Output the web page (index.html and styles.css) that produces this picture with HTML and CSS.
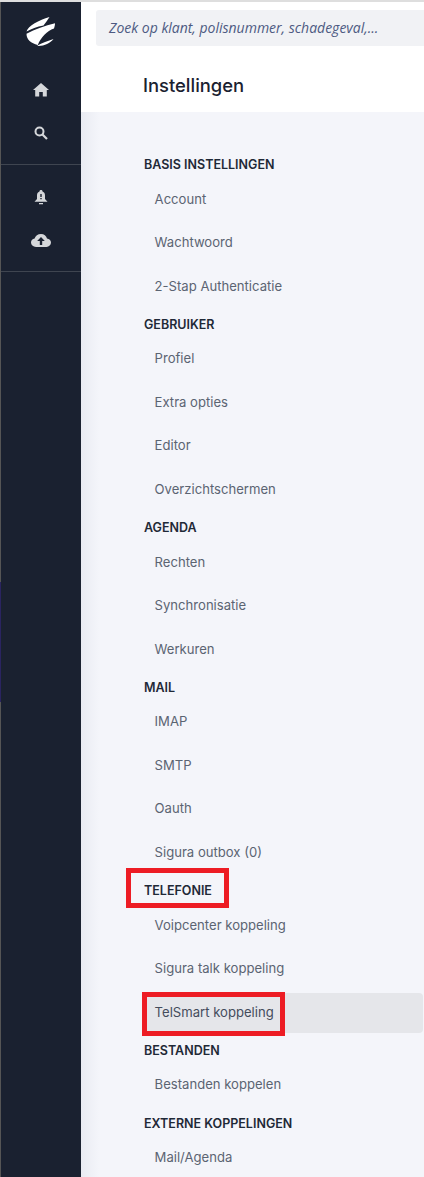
FILE: index.html
```html
<!doctype html>
<html>
<head>
    <meta charset="utf-8">
    <title>Instellingen</title>
    <link rel="stylesheet" href="styles.css">
</head>

<body>
    <div class="app">
        <div class="sidebar">
            <div class="logo">
                <svg width="30" height="30" viewBox="26 17 30 30">
                    <path d="M26.500 31.500 C28 26 39 20 49.500 17 C47.500 20 45.500 23 43.500 25.500 C37 26.500 31 29 26.500 31.500Z" fill="#fff"/>
                    <path d="M26.500 33.800 C35 29.500 45 25.500 55 23.300 C55 25.500 54.500 27 54 28.500 C47 31 41 37 37.800 45 C31 43 26.500 40 26.500 33.800Z" fill="#fff"/>
                    <path d="M37 45.800 C43 46.500 50 43.500 53.500 39 C48 41 42 43 37 45.800Z" fill="#fff"/>
                </svg>
            </div>
            <div class="side-group">
                <svg class="ico" width="16" height="14" viewBox="0 0 16 14"><path d="M8 0 L16 7 L13.800 7 L13.800 13.500 L9.800 13.500 L9.800 9 L6.200 9 L6.200 13.500 L2.200 13.500 L2.200 7 L0 7Z" fill="#d5d7da"/></svg>
                <svg class="ico" width="14" height="14" viewBox="0 0 14 14"><circle cx="5.500" cy="5.500" r="4" fill="none" stroke="#d5d7da" stroke-width="2"/><path d="M8.500 8.500 L13 13" stroke="#d5d7da" stroke-width="2.200"/></svg>
            </div>
            <div class="side-group second">
                <svg class="ico" width="14" height="15" viewBox="0 0 14 15"><path d="M7 0 C8 0 8.500 .6 8.500 1.400 C10.400 2 11 3.600 11 5.600 L11 9 L13.500 11.800 L.5 11.800 L3 9 L3 5.600 C3 3.600 3.600 2 5.500 1.400 C5.500 .6 6 0 7 0Z M6.300 4 L6.300 7 L7.700 7 L7.700 4Z M6.300 8 L6.300 9.200 L7.700 9.200 L7.700 8Z M5 13 L9 13 L9 14.200 L5 14.200Z" fill="#d5d7da" fill-rule="evenodd"/></svg>
                <svg class="ico" width="20" height="13" viewBox="0 0 20 13"><path d="M5 13 C2 13 0 11 0 8.600 C0 6.400 1.600 4.800 3.600 4.600 C4.400 2 6.800 0 10 0 C13 0 15.400 2 16 4.600 C18.200 4.800 20 6.400 20 8.600 C20 11 18 13 15.500 13Z M10 3 L6.200 7 L8.800 7 L8.800 11 L11.200 11 L11.200 7 L13.800 7Z" fill="#d5d7da" fill-rule="evenodd"/></svg>
            </div>
        </div>

        <div class="content">
            <div class="top">
                <div class="search">Zoek op klant, polisnummer, schadegeval,...</div>
                <h1 class="title">Instellingen</h1>
            </div>
            <div class="settings">
                <div class="head">BASIS INSTELLINGEN</div>
                <a class="item">Account</a>
                <a class="item">Wachtwoord</a>
                <a class="item">2-Stap Authenticatie</a>

                <div class="head">GEBRUIKER</div>
                <a class="item">Profiel</a>
                <a class="item">Extra opties</a>
                <a class="item">Editor</a>
                <a class="item">Overzichtschermen</a>

                <div class="head">AGENDA</div>
                <a class="item">Rechten</a>
                <a class="item">Synchronisatie</a>
                <a class="item">Werkuren</a>

                <div class="head">MAIL</div>
                <a class="item">IMAP</a>
                <a class="item">SMTP</a>
                <a class="item">Oauth</a>
                <a class="item">Sigura outbox (0)</a>

                <div class="head">TELEFONIE<span class="mark mark-head"></span></div>
                <a class="item">Voipcenter koppeling</a>
                <a class="item">Sigura talk koppeling</a>
                <a class="item active">TelSmart koppeling<span class="mark mark-item"></span></a>

                <div class="head">BESTANDEN</div>
                <a class="item">Bestanden koppelen</a>

                <div class="head">EXTERNE KOPPELINGEN</div>
                <a class="item">Mail/Agenda</a>
            </div>
        </div>
    </div>
</body>
</html>
```

FILE: styles.css
```css
* {
  box-sizing: border-box;
}

html, body {
  margin: 0;
  height: 100%;
}

body {
  font-family: Inter, "Liberation Sans", sans-serif;
  background: #f4f5fa;
  overflow: hidden;
}

.app {
  display: flex;
  min-height: 1177px;
  border-top: 2px solid #dedede;
}

/* sidebar */
.sidebar {
  width: 81px;
  flex: none;
  padding-left: 1px;
  background: linear-gradient(#555 580px, #2a2460 580px, #2a2460 700px, #555 700px) left top / 1px 100% no-repeat, #1a2130;
}

.logo {
  height: 60px;
  padding: 15px 0 0 25px;
}

.logo svg {
  display: block;
}

.side-group {
  display: flex;
  flex-direction: column;
  align-items: center;
  gap: 29px;
  padding: 21px 0 24px;
  border-bottom: 1px solid #3f4550;
}

.side-group.second {
  padding-top: 25px;
}

.ico {
  display: block;
}

/* content */
.content {
  flex: 1;
  min-width: 0;
}

.top {
  background: #fff;
  height: 110px;
  padding: 8px 0 0 15px;
}

.search {
  height: 36px;
  padding-left: 13px;
  background: #f1f2f5;
  border-radius: 3px 0 0 3px;
  color: #4d5a82;
  font: italic 14px/36px "Open Sans", sans-serif;
}

.title {
  margin: 24.500px 0 0 47px;
  font-size: 18.400px;
  line-height: 28px;
  font-weight: 500;
  color: #1a2130;
}

.settings {
  padding: 38.250px 1px 0 62px;
  background: linear-gradient(to right, #e9ebf2, #f4f5fa 18px);
}

.head {
  position: relative;
  height: 29.250px;
  line-height: 29.500px;
  padding-left: 1px;
  font-size: 12.500px;
  font-weight: 600;
  color: #1f2937;
}

.item {
  position: relative;
  display: block;
  height: 40px;
  line-height: 39px;
  margin-bottom: 3.500px;
  padding-left: 11.600px;
  font-size: 13.100px;
  color: #5b6472;
  border-radius: 4px;
}

.item.active {
  background: #e5e6ea;
  color: #444c5c;
}

/* red annotation boxes drawn on top of the screenshot */
.mark {
  position: absolute;
  border: 5px solid #ed1c24;
}

.mark-head {
  left: -17px;
  top: -8px;
  width: 103px;
  height: 40px;
}

.mark-item {
  left: -1px;
  top: -0.500px;
  width: 143px;
  height: 44px;
}
```
